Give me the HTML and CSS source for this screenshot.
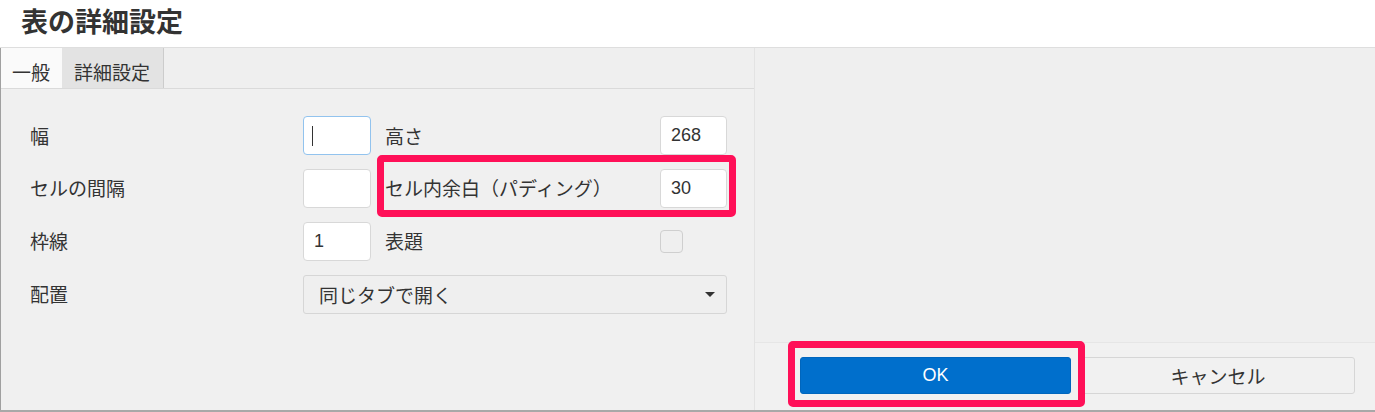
FILE: index.html
```html
<!DOCTYPE html>
<html lang="ja">
<head>
<meta charset="utf-8">
<title>表の詳細設定</title>
<link rel="stylesheet" href="styles.css">
</head>
<body>
<div class="dialog">
  <header class="titlebar">表の詳細設定</header>
  <div class="body">
    <section class="panel">
      <nav class="tabs">
        <div class="tab tab-active">一般</div>
        <div class="tab tab-second">詳細設定</div>
      </nav>
      <div class="form">
        <label class="label">幅</label>
        <div class="input input-focus"><span class="caret"></span></div>
        <label class="label label2">高さ</label>
        <div class="input">268</div>

        <label class="label">セルの間隔</label>
        <div class="input"></div>
        <label class="label label2">セル内余白（パディング）</label>
        <div class="input">30</div>

        <label class="label">枠線</label>
        <div class="input">1</div>
        <label class="label label2">表題</label>
        <div class="checkbox-cell"><span class="checkbox"></span></div>

        <label class="label">配置</label>
        <div class="select">
          <span>同じタブで開く</span>
          <span class="arrow"></span>
        </div>

        <div class="highlight highlight-form"></div>
      </div>
    </section>
    <section class="side">
      <div class="side-top"></div>
      <footer class="footer">
        <button class="btn btn-ok">OK</button>
        <button class="btn btn-cancel">キャンセル</button>
        <div class="highlight highlight-ok"></div>
      </footer>
    </section>
  </div>
</div>
</body>
</html>
```

FILE: styles.css
```css
* { box-sizing: border-box; }

html, body {
  margin: 0;
  padding: 0;
  background: #ffffff;
}

body {
  font-family: "Noto Sans CJK JP", "Noto Sans", sans-serif;
  color: #333333;
}

.dialog {
  width: 1375px;
  height: 412px;
  display: flex;
  flex-direction: column;
  border-bottom: 2px solid #a8a8a8;
}

.titlebar {
  height: 48px;
  flex: none;
  background: #ffffff;
  border-bottom: 1px solid #dedede;
  padding: 4px 0 0 21px;
  font-size: 27px;
  font-weight: 700;
  line-height: 34px;
  color: #333333;
}

.body {
  flex: 1;
  display: flex;
  min-height: 0;
}

.panel {
  width: 755px;
  flex: none;
  background: #f0f0f0;
  border-left: 1px solid #a0a0a0;
  border-right: 1px solid #e3e3e3;
  display: flex;
  flex-direction: column;
}

.tabs {
  height: 41px;
  flex: none;
  display: flex;
  border-bottom: 1px solid #dadada;
  background: #efefef;
}

.tab {
  height: 40px;
  font-size: 19px;
  line-height: 24px;
  padding-top: 12px;
  color: #333333;
}

.tab-active {
  width: 61px;
  padding-left: 11px;
  background: #fafafa;
}

.tab-second {
  width: 102px;
  padding-left: 12px;
  background: #e3e3e3;
  border-right: 1px solid #cccccc;
}

.form {
  position: relative;
  display: grid;
  grid-template-columns: 273px 68px 289px 67px;
  grid-template-rows: 39px 40px 40px 39px;
  row-gap: 13px;
  padding: 27px 0 0 29px;
  align-items: center;
}

.label {
  font-size: 19px;
  line-height: 24px;
  color: #333333;
  white-space: nowrap;
}

.label2 {
  padding-left: 14px;
}

.input {
  height: 39px;
  background: #ffffff;
  border: 1px solid #d8d8d8;
  border-radius: 4px;
  font-family: "Liberation Sans", Arial, sans-serif;
  font-size: 18px;
  line-height: 37px;
  padding-left: 10px;
  color: #333333;
  display: flex;
  align-items: center;
}

.input-focus {
  border-color: #92c3ee;
}

.caret {
  display: block;
  width: 1px;
  height: 20px;
  background: #333333;
  margin-left: -2px;
}

.checkbox-cell {
  display: flex;
  align-items: center;
}

.checkbox {
  display: block;
  width: 23px;
  height: 23px;
  border: 1px solid #cfcfcf;
  border-radius: 4px;
  background: #efefef;
}

.select {
  grid-column: 2 / 5;
  height: 39px;
  margin-top: 1px;
  background: #efefef;
  border: 1px solid #d6d6d6;
  border-radius: 3px;
  display: flex;
  align-items: center;
  justify-content: space-between;
  padding: 0 11px 0 15px;
  font-size: 19px;
  color: #333333;
}

.arrow {
  width: 0;
  height: 0;
  border-left: 5px solid transparent;
  border-right: 5px solid transparent;
  border-top: 5px solid #333333;
}

.highlight {
  position: absolute;
  border: 7px solid #ff1058;
  border-radius: 5px;
  pointer-events: none;
}

.highlight-form {
  left: 376px;
  top: 66px;
  width: 359px;
  height: 62px;
}

.side {
  flex: 1;
  display: flex;
  flex-direction: column;
  background: #efefef;
}

.side-top {
  flex: 1;
}

.footer {
  position: relative;
  height: 68px;
  flex: none;
  border-top: 1px solid #e6e6e6;
  background: #f1f1f1;
  display: flex;
  justify-content: flex-end;
  align-items: flex-start;
  gap: 10px;
  padding: 14px 20px 0 0;
}

.btn {
  height: 37px;
  border-radius: 3px;
  font-family: "Noto Sans CJK JP", "Noto Sans", sans-serif;
  font-size: 19px;
  cursor: pointer;
}

.btn-ok {
  width: 271px;
  background: #006fcc;
  border: 1px solid #0066bd;
  color: #ffffff;
  font-family: "Liberation Sans", Arial, sans-serif;
  font-size: 18px;
}

.btn-cancel {
  width: 274px;
  background: #f1f1f1;
  border: 1px solid #d6d6d6;
  color: #333333;
}

.highlight-ok {
  left: 33px;
  top: -2px;
  width: 297px;
  height: 66px;
}
```
